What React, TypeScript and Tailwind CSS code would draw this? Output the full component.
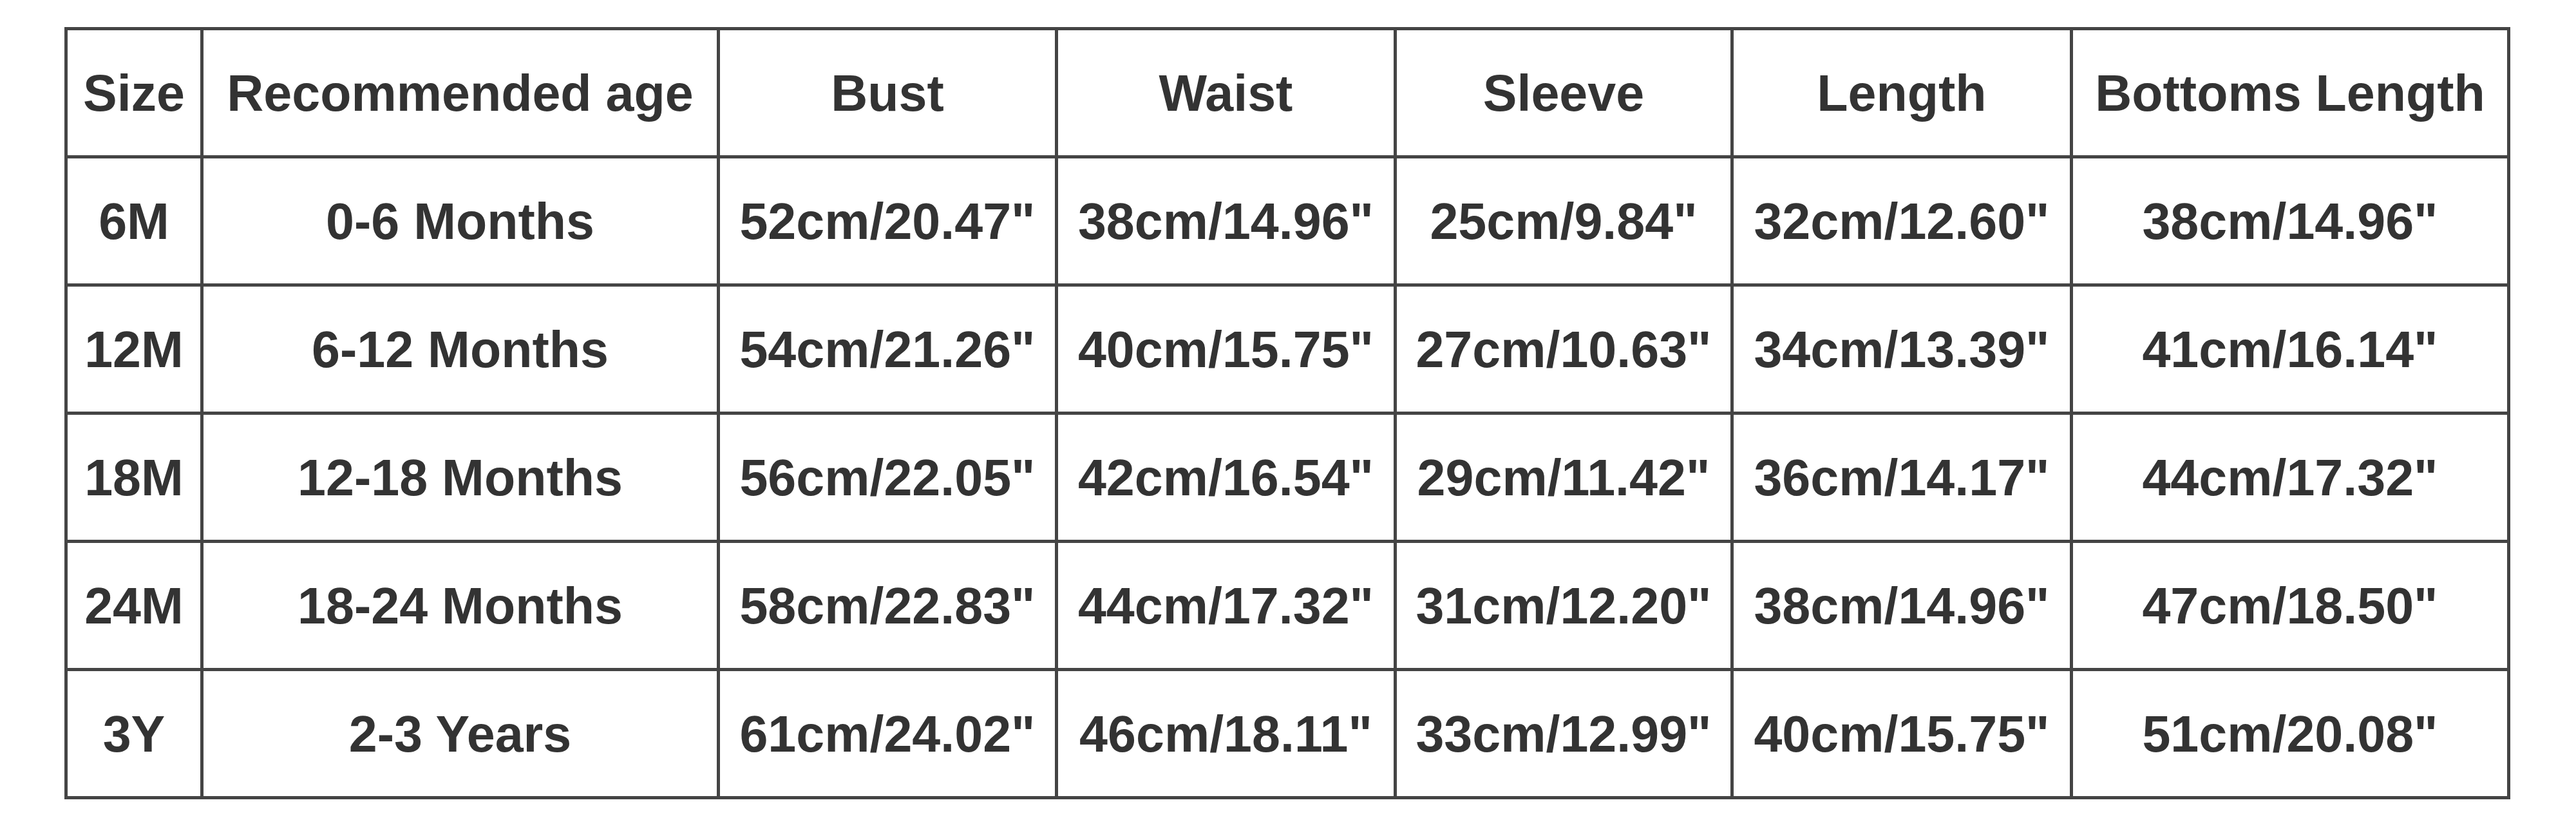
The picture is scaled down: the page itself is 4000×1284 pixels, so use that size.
const headers = ["Size", "Recommended age", "Bust", "Waist", "Sleeve", "Length", "Bottoms Length"]

const rows = [
  ["6M", "0-6 Months", '52cm/20.47"', '38cm/14.96"', '25cm/9.84"', '32cm/12.60"', '38cm/14.96"'],
  ["12M", "6-12 Months", '54cm/21.26"', '40cm/15.75"', '27cm/10.63"', '34cm/13.39"', '41cm/16.14"'],
  ["18M", "12-18 Months", '56cm/22.05"', '42cm/16.54"', '29cm/11.42"', '36cm/14.17"', '44cm/17.32"'],
  ["24M", "18-24 Months", '58cm/22.83"', '44cm/17.32"', '31cm/12.20"', '38cm/14.96"', '47cm/18.50"'],
  ["3Y", "2-3 Years", '61cm/24.02"', '46cm/18.11"', '33cm/12.99"', '40cm/15.75"', '51cm/20.08"'],
]

export default function App() {
  const all = [headers, ...rows]
  return (
    <div className="min-h-screen bg-white pt-[42px] pl-[100px] font-['Liberation_Sans',Arial,sans-serif]">
      <div className="inline-grid grid-cols-[206px_797px_520px_521px_518px_522px_674px] auto-rows-[194px] gap-[5px] p-[5px] bg-[#444444]">
        {all.map((row, i) =>
          row.map((cell, j) => (
            <div
              key={`${i}-${j}`}
              className="bg-white flex items-center justify-center text-[79px] font-bold text-[#333333] leading-none whitespace-nowrap"
            >
              {cell}
            </div>
          ))
        )}
      </div>
    </div>
  )
}
